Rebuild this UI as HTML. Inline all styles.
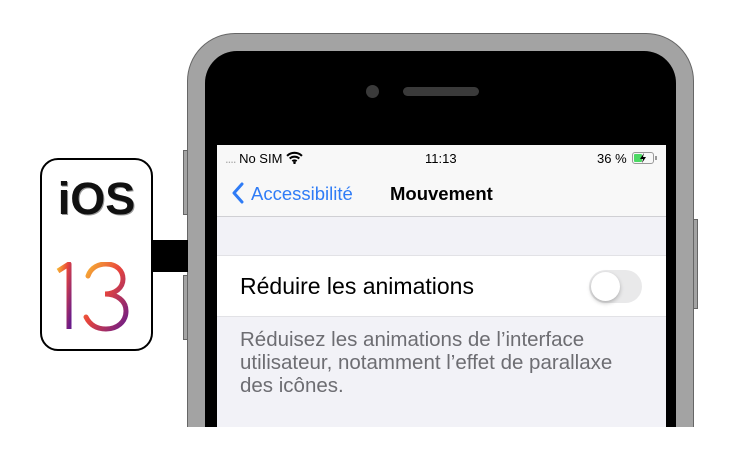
<!DOCTYPE html>
<html><head><meta charset="utf-8"><style>
*{margin:0;padding:0;box-sizing:border-box}
body{width:754px;height:476px;background:#fff;position:relative;overflow:hidden;font-family:"Liberation Sans",Arial,sans-serif}
.a{position:absolute}
</style></head><body>
<div class="a" style="left:183px;top:150px;width:6px;height:65px;background:#a3a3a3;border:1px solid #666"></div>
<div class="a" style="left:183px;top:275px;width:6px;height:65px;background:#a3a3a3;border:1px solid #666"></div>
<div class="a" style="left:690px;top:219px;width:8px;height:90px;background:#a3a3a3;border:1px solid #666"></div>
<div class="a" style="left:187px;top:33px;width:507px;height:420px;background:#a3a3a3;border:1px solid #666;border-radius:48px 48px 0 0"></div>
<div class="a" style="left:205px;top:51px;width:471px;height:400px;background:#000;border-radius:32px 32px 0 0"></div>
<div class="a" style="left:366px;top:85px;width:13px;height:13px;border-radius:50%;background:#3a3a3a"></div>
<div class="a" style="left:403px;top:87px;width:76px;height:9px;border-radius:5px;background:#3a3a3a"></div>
<div class="a" style="left:217px;top:145px;width:449px;height:285px;background:#f2f2f7;overflow:hidden">
  <div class="a" style="left:0;top:0;width:449px;height:72px;background:#f8f8f8;border-bottom:1px solid #d0d0d4"></div>
  <div class="a" style="left:8px;top:6px;font-size:13px;color:#000"><span style="color:#aaa;letter-spacing:-1px">....</span> No SIM
    <svg width="17" height="13" viewBox="0 0 16 12" style="vertical-align:-1px"><path d="M1 4.5a10 10 0 0 1 14 0M3.5 7a6.5 6.5 0 0 1 9 0M6 9.5a3 3 0 0 1 4 0" stroke="#000" stroke-width="2" fill="none"/><circle cx="8" cy="11" r="1.2"/></svg></div>
  <div class="a" style="left:208px;top:6px;font-size:13px">11:13</div>
  <div class="a" style="left:380px;top:6px;font-size:13px">36 %</div>
  <div class="a" style="left:415px;top:7px;width:22px;height:12px;border:1px solid #999;border-radius:3px"><div style="width:8px;height:8px;margin:1px;background:#4cd964;border-radius:1px"></div></div>
  <div class="a" style="left:438px;top:11px;width:2px;height:4px;background:#999"></div>
  <svg class="a" style="left:421px;top:8px" width="10" height="10" viewBox="0 0 10 10"><path d="M6 0L2 6h3L4 10l4-6H5z" fill="#000"/></svg>
  <svg class="a" style="left:14px;top:37px" width="14" height="22" viewBox="0 0 14 22"><path d="M11 2L3 11l8 9" stroke="#2f7cf6" stroke-width="3" fill="none" stroke-linecap="round" stroke-linejoin="round"/></svg>
  <div class="a" style="left:34px;top:38px;font-size:18.5px;color:#2f7cf6">Accessibilité</div>
  <div class="a" style="left:173px;top:38px;font-size:18.5px;font-weight:bold;color:#000">Mouvement</div>
  <div class="a" style="left:0;top:110px;width:449px;height:62px;background:#fff;border-top:1px solid #e2e2e6;border-bottom:1px solid #e2e2e6"></div>
  <div class="a" style="left:23px;top:128px;font-size:23px;color:#000">Réduire les animations</div>
  <div class="a" style="left:372px;top:125px;width:53px;height:33px;border-radius:17px;background:#e9e9ea"><div style="width:29px;height:29px;margin:2px;border-radius:50%;background:#fff;box-shadow:0 2px 4px rgba(0,0,0,.25)"></div></div>
  <div class="a" style="left:23px;top:183px;font-size:20.5px;line-height:23px;color:#6d6d72;white-space:nowrap">Réduisez les animations de l’interface<br>utilisateur, notamment l’effet de parallaxe<br>des icônes.</div>
</div>
<div class="a" style="left:0;top:427px;width:754px;height:49px;background:#fff"></div>
<div class="a" style="left:150px;top:240px;width:38px;height:32px;background:#000"></div>
<div class="a" style="left:40px;top:158px;width:113px;height:193px;border:2px solid #000;border-radius:18px;background:#fff"></div>
<div class="a" style="left:40px;top:173px;width:113px;text-align:center;font-size:45px;font-weight:bold;color:#111;text-shadow:1px 1px 0 #999">iOS</div>
<svg class="a" style="left:55px;top:262px" width="80" height="70" viewBox="0 0 80 70">
<defs><linearGradient id="g" x1="0" y1="0" x2="1" y2="1"><stop offset="0" stop-color="#f7b733"/><stop offset=".45" stop-color="#e8453c"/><stop offset="1" stop-color="#6a1b8a"/></linearGradient></defs>
<path d="M3 9L14 2V67" stroke="url(#g)" stroke-width="5" fill="none" stroke-linejoin="round"/>
<path d="M33 14C36 5 44 2 51 2C62 2 68 9 68 17C68 26 60 32 50 32C62 32 71 39 71 49C71 60 62 67 51 67C42 67 35 63 31 55" stroke="url(#g)" stroke-width="5" fill="none" stroke-linecap="round"/>
</svg>
</body></html>
